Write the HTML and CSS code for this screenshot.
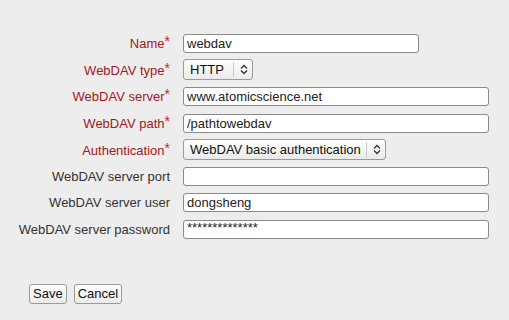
FILE: index.html
```html
<!DOCTYPE html>
<html lang="en">
<head>
    <meta charset="UTF-8">
    <meta name="viewport" content="width=device-width, initial-scale=1.0">
    <title>WebDAV account</title>
    <link rel="stylesheet" href="styles.css">
</head>
<body>
    <form class="account-form">
        <div class="fields">
            <label class="required" for="name">Name<span class="star">*</span></label>
            <input type="text" id="name" class="short" value="webdav">

            <label class="required" for="type">WebDAV type<span class="star">*</span></label>
            <span class="select-wrap">
                <select id="type" class="type-select">
                    <option>HTTP</option>
                    <option>HTTPS</option>
                </select>
                <span class="arrows"><svg width="8" height="11" viewBox="0 0 8 11"><path d="M1 4.5 L4 1.5 L7 4.5 M1 6.5 L4 9.5 L7 6.5" fill="none" stroke="#333" stroke-width="1.3"/></svg></span>
            </span>

            <label class="required" for="server">WebDAV server<span class="star">*</span></label>
            <input type="text" id="server" value="www.atomicscience.net">

            <label class="required" for="path">WebDAV path<span class="star">*</span></label>
            <input type="text" id="path" value="/pathtowebdav">

            <label class="required" for="auth">Authentication<span class="star">*</span></label>
            <span class="select-wrap">
                <select id="auth" class="auth-select">
                    <option>WebDAV basic authentication</option>
                    <option>WebDAV digest authentication</option>
                </select>
                <span class="arrows"><svg width="8" height="11" viewBox="0 0 8 11"><path d="M1 4.5 L4 1.5 L7 4.5 M1 6.5 L4 9.5 L7 6.5" fill="none" stroke="#333" stroke-width="1.3"/></svg></span>
            </span>

            <label for="port">WebDAV server port</label>
            <input type="text" id="port" value="">

            <label for="user">WebDAV server user</label>
            <input type="text" id="user" value="dongsheng">

            <label for="password">WebDAV server password</label>
            <input type="text" id="password" class="secret" value="**************">
        </div>

        <div class="actions">
            <button type="button">Save</button>
            <button type="button">Cancel</button>
        </div>
    </form>
</body>
</html>
```

FILE: styles.css
```css
body {
    font-family: "Liberation Sans", Arial, sans-serif;
    font-size: 13px;
    margin: 0;
    background-color: #ededed;
    color: #333;
}
.account-form {
    padding-top: 30px;
}
.fields {
    display: grid;
    grid-template-columns: 170px 306px;
    grid-auto-rows: 26.6px;
    column-gap: 13px;
    align-items: center;
}
.fields label {
    text-align: right;
    white-space: nowrap;
    color: #333;
}
.fields label.required {
    color: #a0191c;
}
.star {
    color: #e0161c;
    font-size: 14px;
    position: relative;
    top: -2px;
}
input[type="text"] {
    box-sizing: border-box;
    width: 306px;
    height: 19px;
    margin: 0;
    padding: 0 3px;
    font-family: "Liberation Sans", Arial, sans-serif;
    font-size: 13px;
    color: #222;
    background-color: #fff;
    border: 1px solid #8a8a8a;
    border-radius: 3px;
}
input.short {
    width: 236px;
}
input.secret {
    padding-bottom: 4px;
}
.select-wrap {
    position: relative;
    justify-self: start;
    display: inline-block;
}
select {
    -webkit-appearance: none;
    appearance: none;
    box-sizing: border-box;
    height: 21px;
    margin: 0;
    padding: 0 22px 0 6px;
    font-family: "Liberation Sans", Arial, sans-serif;
    font-size: 13px;
    color: #111;
    background: linear-gradient(#fdfdfd, #ebebeb);
    border: 1px solid #9a9a9a;
    border-radius: 3px;
}
.type-select {
    width: 70px;
}
.auth-select {
    width: 203px;
}
.arrows {
    position: absolute;
    top: 3px;
    right: 0;
    width: 19px;
    height: 15px;
    border-left: 1px solid #c8c8c8;
    display: flex;
    align-items: center;
    justify-content: center;
    pointer-events: none;
}
.actions {
    display: flex;
    gap: 7px;
    padding: 41px 0 0 29px;
}
button {
    height: 20px;
    padding: 0 3px;
    font-family: "Liberation Sans", Arial, sans-serif;
    font-size: 13px;
    color: #111;
    background: linear-gradient(#fdfdfd, #ebebeb);
    border: 1px solid #9a9a9a;
    border-radius: 3px;
}
```
